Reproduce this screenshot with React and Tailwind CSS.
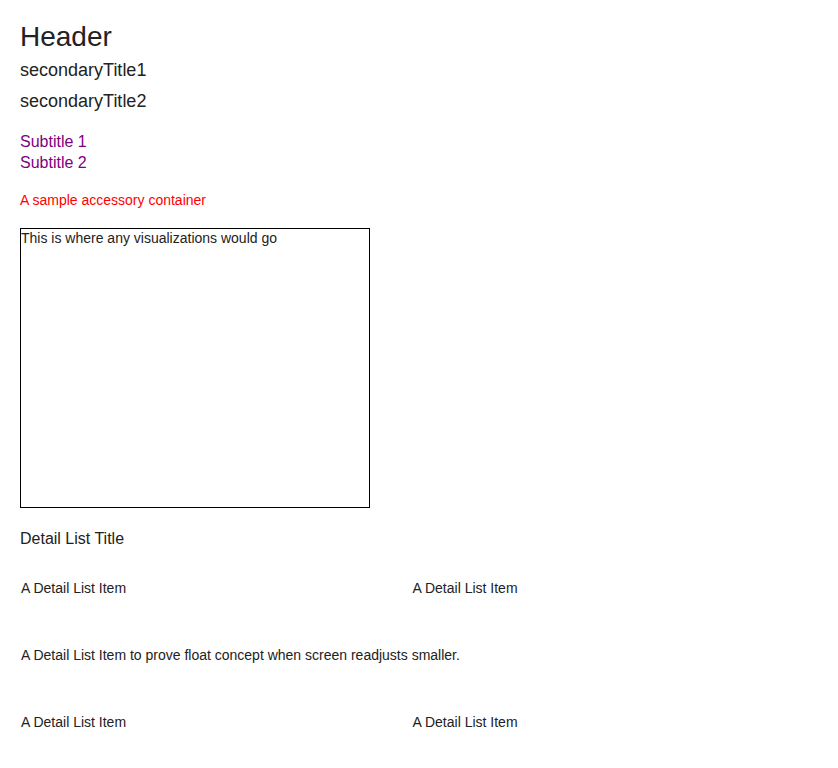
export default function App() {
  const items = [
    { text: "A Detail List Item", wide: false },
    { text: "A Detail List Item", wide: false },
    { text: "A Detail List Item to prove float concept when screen readjusts smaller.", wide: true },
    { text: "A Detail List Item", wide: false },
    { text: "A Detail List Item", wide: false },
  ]

  return (
    <div className="px-[20px] pt-[20px] pb-[56px] font-['Liberation_Sans',Arial,sans-serif] text-[#222]">
      <h1 className="text-[28px] leading-[34px]">Header</h1>
      <h2 className="text-[18px] leading-[31px] pt-[1px]">secondaryTitle1</h2>
      <h2 className="text-[18px] leading-[31px]">secondaryTitle2</h2>

      <div className="mt-[14px] text-[16px] leading-[21px] text-[#800080]">
        <div>Subtitle 1</div>
        <div>Subtitle 2</div>
      </div>

      <div className="mt-[17px] text-[14px] leading-[20px] text-[#ff0000]">
        A sample accessory container
      </div>

      <div className="mt-[18px] w-[350px] h-[280px] border border-black text-[14px] leading-[19px]">
        This is where any visualizations would go
      </div>

      <h3 className="mt-[21px] text-[16px] leading-[20px]">Detail List Title</h3>

      <div className="mt-[6px] w-[783px] grid grid-cols-2 text-[14px] leading-[67px]">
        {items.map((item, i) => (
          <div key={i} className={item.wide ? "col-span-2 pl-[1px]" : "pl-[1px]"}>
            {item.text}
          </div>
        ))}
      </div>
    </div>
  )
}
